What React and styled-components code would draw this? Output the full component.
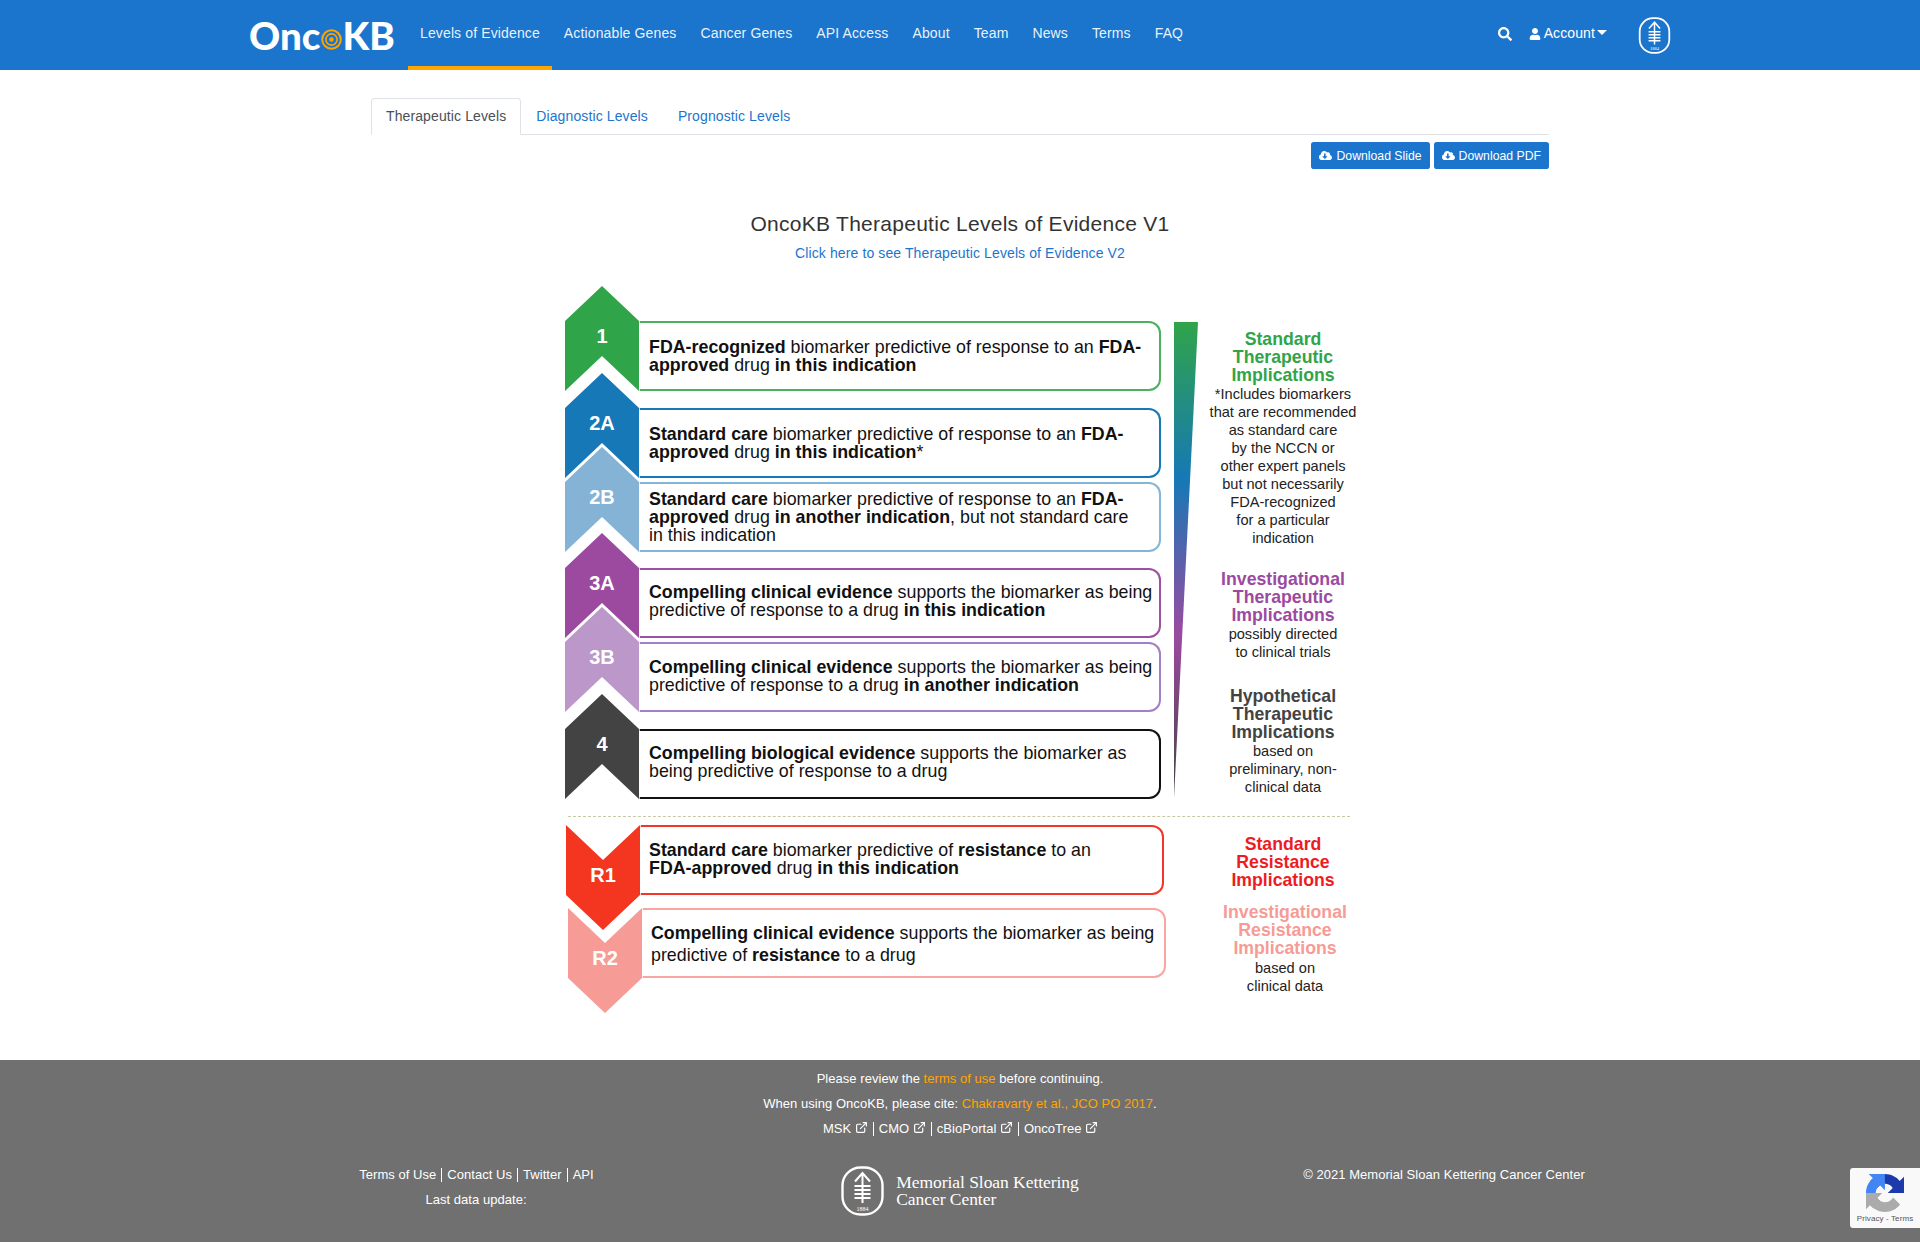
import React from 'react';
import styled, { createGlobalStyle } from 'styled-components';
import { FaSearch, FaUser, FaCloudDownloadAlt } from 'react-icons/fa';
import { ExternalLink } from 'lucide-react';

const BLUE = '#1c75cd';
const ORANGE = '#ffa500';

const GlobalStyle = createGlobalStyle`
  html { font-size: 14px; }
  body {
    margin: 0;
    background: #fff;
    color: #212529;
    font-family: "Liberation Sans", Arial, sans-serif;
    font-size: 14px;
    line-height: 1.5;
    letter-spacing: 0.11px;
  }
  a { text-decoration: none; color: inherit; }
`;

const Page = styled.div`
  position: relative;
  min-height: 1242px;
  display: flex;
  flex-direction: column;
`;

const NavBar = styled.header`
  height: 70px;
  background: ${BLUE};
  color: rgba(255, 255, 255, 0.92);
`;

const NavInner = styled.div`
  width: 1452px;
  height: 100%;
  margin: 0 auto;
  padding: 0 15px 0 15px;
  box-sizing: border-box;
  display: flex;
  align-items: center;
`;

const Brand = styled.a`
  display: flex;
  align-items: center;
  width: 147px;
  margin-right: 12px;
  color: #fff;
  font-family: Lato, "Liberation Sans", sans-serif;
  font-weight: 900;
  font-size: 38.5px;
  line-height: 1;
  letter-spacing: 0;
`;

const NavLinks = styled.nav`
  display: flex;
  align-self: stretch;
  letter-spacing: 0.13px;
`;

const NavLink = styled.a`
  display: flex;
  align-items: center;
  padding: 0 12px;
  box-sizing: border-box;
  border-bottom: 4px solid ${(p) => (p.$active ? ORANGE : 'transparent')};
`;

const NavRight = styled.div`
  margin-left: auto;
  display: flex;
  align-items: center;
  color: #fff;
`;

const SearchIcon = styled(FaSearch)`
  font-size: 14px;
  margin-right: 17px;
  margin-bottom: 3px;
`;

const Account = styled.a`
  display: flex;
  align-items: center;
  gap: 3px;
  margin-right: 31px;
  margin-bottom: 3px;
  svg { font-size: 12px; }
`;

const Caret = styled.span`
  width: 0;
  height: 0;
  margin-left: -1px;
  margin-bottom: 3px;
  border-left: 5px solid transparent;
  border-right: 5px solid transparent;
  border-top: 5px solid #fff;
`;

const Main = styled.main`
  width: 1178px;
  margin: 0 auto;
  padding-top: 28px;
  flex: 1;
`;

const Tabs = styled.div`
  display: flex;
  border-bottom: 1px solid #dee2e6;
`;

const Tab = styled.a`
  padding: 7px 14px;
  margin-bottom: -1px;
  border: 1px solid ${(p) => (p.$active ? '#dee2e6' : 'transparent')};
  border-bottom-color: ${(p) => (p.$active ? '#fff' : 'transparent')};
  border-radius: 3.5px 3.5px 0 0;
  color: ${(p) => (p.$active ? '#495057' : BLUE)};
`;

const Actions = styled.div`
  display: flex;
  justify-content: flex-end;
  gap: 4px;
  margin-top: 7px;
`;

const DownloadButton = styled.button`
  display: flex;
  align-items: center;
  gap: 4px;
  height: 27px;
  padding: 0 8px;
  border: 0;
  border-radius: 2.8px;
  background: ${BLUE};
  color: #fff;
  font-family: inherit;
  font-size: 12.25px;
  letter-spacing: 0;
  svg { font-size: 13px; }
`;

const Heading = styled.div`
  margin-top: 39px;
  text-align: center;
`;

const Title = styled.h4`
  margin: 0;
  font-size: 21px;
  font-weight: 400;
  line-height: 31px;
  letter-spacing: 0.27px;
  color: #333;
`;

const SubLink = styled.a`
  display: block;
  margin-top: 4px;
  color: ${BLUE};
`;

const Diagram = styled.div`
  width: 800px;
  margin: 57px 0 0 194px;
  letter-spacing: 0;
`;

const DiagramBand = styled.div`
  display: flex;
  align-items: flex-start;
`;

const Rows = styled.div`
  width: ${(p) => p.$width}px;
  flex: none;
`;

const Row = styled.div`
  position: relative;
  display: flex;
  width: ${(p) => p.$width || 596}px;
  height: 70px;
  margin-top: ${(p) => p.$gap || 0}px;
  margin-left: ${(p) => p.$indent || 0}px;
`;

const ChevronBox = styled.div`
  position: absolute;
  left: 0;
  top: ${(p) => (p.$down ? 0 : -35)}px;
  width: 74px;
  height: 105px;
  svg { display: block; }
`;

const ChevronLabel = styled.span`
  position: absolute;
  left: 0;
  right: 0;
  top: 38px;
  text-align: center;
  color: #fff;
  font-size: 20px;
  font-weight: 700;
  line-height: 24px;
`;

const RowText = styled.div`
  flex: 1;
  margin-left: 74px;
  padding: ${(p) => p.$drop || 0}px 0 ${(p) => p.$lift || 0}px ${(p) => p.$pad || 10}px;
  display: flex;
  align-items: center;
  box-sizing: border-box;
  border: 2px solid ${(p) => p.$color};
  border-left: 0;
  border-radius: 0 12px 12px 0;
  color: #111;
  font-size: 17.8px;
  letter-spacing: 0.02px;
  line-height: ${(p) => p.$line || 18}px;
  white-space: nowrap;
  b { font-weight: 700; }
`;

const Wedge = styled.svg`
  flex: none;
  width: 24px;
  height: 476px;
  margin: 1px 0 0 13px;
`;

const Notes = styled.div`
  flex: none;
  width: 170px;
  margin-top: ${(p) => p.$top}px;
  margin-left: ${(p) => p.$left || 0}px;
  text-align: center;
  line-height: 18px;
  white-space: nowrap;
`;

const NoteGroup = styled.div`
  margin-top: ${(p) => p.$gap || 0}px;
  padding-left: ${(p) => p.$shift || 0}px;
`;

const NoteTitle = styled.div`
  color: ${(p) => p.$color};
  font-size: 17.7px;
  font-weight: 700;
`;

const NoteText = styled.div`
  color: #222;
  font-size: 14.6px;
  margin-top: ${(p) => p.$gap || 0}px;
`;

const Divider = styled.div`
  width: 782px;
  margin: 17px 0 8px 3px;
  border-top: 1px dashed #c8c7a6;
`;

const Footer = styled.footer`
  height: 182px;
  background: #707070;
  color: #fff;
  font-size: 13px;
  letter-spacing: 0.04px;
  box-sizing: border-box;
  padding-top: 6px;
`;

const FooterLine = styled.div`
  display: flex;
  justify-content: center;
  align-items: center;
  height: 25px;
  white-space: pre;
`;

const Accent = styled.a`
  color: ${ORANGE};
`;

const FooterGrid = styled.div`
  width: 1452px;
  margin: 21px auto 0;
  display: grid;
  grid-template-columns: repeat(3, 1fr);
`;

const FooterCol = styled.div`
  display: flex;
  flex-direction: column;
  align-items: center;
`;

const Sep = styled.a`
  padding: 0 5px;
  line-height: 14px;
  border-left: 1px solid ${(p) => (p.$first ? 'transparent' : '#fff')};
  display: inline-flex;
  align-items: center;
  gap: 3.5px;
  svg { margin-top: -2px; }
`;

const MskFooter = styled.div`
  display: flex;
  align-items: center;
  gap: 12px;
  margin-top: 4px;
  color: #fff;
`;

const MskName = styled.div`
  font-family: "Liberation Serif", serif;
  font-size: 17.5px;
  line-height: 17px;
  letter-spacing: -0.05px;
  white-space: nowrap;
  margin-top: -1px;
`;

const Recaptcha = styled.div`
  position: absolute;
  right: 0;
  bottom: 14px;
  width: 70px;
  height: 60px;
  background: #f9f9f9;
  border-radius: 3px 0 0 3px;
  display: flex;
  flex-direction: column;
  align-items: center;
  padding-top: 6px;
  box-sizing: border-box;
  color: #555;
  font-size: 8px;
  line-height: 10px;
  white-space: nowrap;
  svg { display: block; margin-bottom: 2px; }
`;

const upPoints = '37,0 74,35 74,105 37,70 0,105 0,35';
const downPoints = '0,0 37,35 74,0 74,70 37,105 0,70';

const Chevron = ({ label, color, down }) => (
  <ChevronBox $down={down}>
    <svg width="74" height="105" viewBox="0 0 74 105" overflow="visible">
      <polygon points={down ? downPoints : upPoints} fill={color} stroke="#fff" strokeWidth="1.5" paintOrder="stroke" />
    </svg>
    <ChevronLabel>{label}</ChevronLabel>
  </ChevronBox>
);

const Target = () => (
  <svg width="21" height="21" viewBox="0 0 21 21" style={{ margin: '8px 0 0 1px', flex: 'none' }}>
    <circle cx="10.5" cy="10.5" r="9.3" fill="none" stroke={ORANGE} strokeWidth="2" />
    <circle cx="10.5" cy="10.5" r="5.6" fill="none" stroke={ORANGE} strokeWidth="1.6" />
    <circle cx="10.5" cy="10.5" r="2.2" fill={ORANGE} />
  </svg>
);

const MskMark = ({ width, height }) => (
  <svg width={width} height={height} viewBox="0 0 43 50">
    <rect x="1.5" y="1.5" width="40" height="47" rx="18" fill="none" stroke="#fff" strokeWidth="2.4" />
    <path d="M21.5 7v30M14 15.5l7.5-8.5 7.5 8.5" fill="none" stroke="#fff" strokeWidth="2" />
    <path d="M13.5 20h16M13.5 24h16M13.5 28h16M13.5 32h16" fill="none" stroke="#fff" strokeWidth="2" />
    <text x="21.5" y="44.5" textAnchor="middle" fill="#fff" fontSize="6" fontFamily="Liberation Serif, serif">1884</text>
  </svg>
);

const RecaptchaMark = () => (
  <svg width="38" height="38" viewBox="0 0 64 64">
    <path d="M64 31.955l-.033-1.37V4.687l-7.16 7.16C50.948 4.674 42.033.093 32.05.093c-10.4 0-19.622 4.96-25.458 12.64l11.736 11.86a15.55 15.55 0 0 1 4.754-5.334c2.05-1.6 4.952-2.906 8.968-2.906.485 0 .86.057 1.135.163 4.976.393 9.288 3.14 11.828 7.124l-8.307 8.307 26.294-.001" fill="#1c3aa9" />
    <path d="M31.862.094l-1.37.033H4.594l7.16 7.16C4.58 13.147 0 22.06 0 32.046c0 10.4 4.96 19.622 12.64 25.458L24.5 45.768a15.55 15.55 0 0 1-5.334-4.754c-1.6-2.05-2.906-4.952-2.906-8.968 0-.485.057-.86.163-1.135.393-4.976 3.14-9.288 7.124-11.828l8.307 8.307.001-26.294" fill="#4285f4" />
    <path d="M.001 32.045l.033 1.37v25.898l7.16-7.16c5.86 7.173 14.774 11.754 24.76 11.754 10.4 0 19.622-4.96 25.458-12.64L45.676 39.41a15.55 15.55 0 0 1-4.754 5.334c-2.05 1.6-4.952 2.906-8.968 2.906-.485 0-.86-.057-1.135-.163-4.976-.393-9.288-3.14-11.828-7.124l8.307-8.307-26.294.001" fill="#ababab" />
  </svg>
);

const navItems = ['Levels of Evidence', 'Actionable Genes', 'Cancer Genes', 'API Access', 'About', 'Team', 'News', 'Terms', 'FAQ'];

const levels = [
  { label: '1', color: '#30a449', line: '#4cb05f', gap: 0, text: <><b>FDA-recognized</b> biomarker predictive of response to an <b>FDA-</b><br /><b>approved</b> drug <b>in this indication</b></> },
  { label: '2A', color: '#1678b6', line: '#1678b6', gap: 17, text: <><b>Standard care</b> biomarker predictive of response to an <b>FDA-</b><br /><b>approved</b> drug <b>in this indication</b>*</> },
  { label: '2B', color: '#84b3d6', line: '#85b6d8', gap: 4, text: <><b>Standard care</b> biomarker predictive of response to an <b>FDA-</b><br /><b>approved</b> drug <b>in another indication</b>, but not standard care<br />in this indication</> },
  { label: '3A', color: '#9b4a9f', line: '#9e50a2', gap: 16, lift: 4, text: <><b>Compelling clinical evidence</b> supports the biomarker as being<br />predictive of response to a drug <b>in this indication</b></> },
  { label: '3B', color: '#bc97c9', line: '#a57fc4', gap: 4, lift: 2, text: <><b>Compelling clinical evidence</b> supports the biomarker as being<br />predictive of response to a drug <b>in another indication</b></> },
  { label: '4', color: '#434343', line: '#111', gap: 17, lift: 4, text: <><b>Compelling biological evidence</b> supports the biomarker as<br />being predictive of response to a drug</> },
];

export default function App() {
  return (
    <Page>
      <GlobalStyle />
      <NavBar>
        <NavInner>
          <Brand href="#">Onc<Target />KB</Brand>
          <NavLinks>
            {navItems.map((item, i) => (
              <NavLink href="#" key={item} $active={i === 0}>{item}</NavLink>
            ))}
          </NavLinks>
          <NavRight>
            <SearchIcon />
            <Account href="#"><FaUser />Account<Caret /></Account>
            <MskMark width={33} height={37} />
          </NavRight>
        </NavInner>
      </NavBar>

      <Main>
        <Tabs>
          <Tab href="#" $active>Therapeutic Levels</Tab>
          <Tab href="#">Diagnostic Levels</Tab>
          <Tab href="#">Prognostic Levels</Tab>
        </Tabs>
        <Actions>
          <DownloadButton><FaCloudDownloadAlt />Download Slide</DownloadButton>
          <DownloadButton><FaCloudDownloadAlt />Download PDF</DownloadButton>
        </Actions>
        <Heading>
          <Title>OncoKB Therapeutic Levels of Evidence V1</Title>
          <SubLink href="#">Click here to see Therapeutic Levels of Evidence V2</SubLink>
        </Heading>

        <Diagram>
          <DiagramBand>
            <Rows $width={596}>
              {levels.map((level) => (
                <Row key={level.label} $gap={level.gap}>
                  <Chevron label={level.label} color={level.color} />
                  <RowText $color={level.line} $lift={level.lift}>
                    <div>{level.text}</div>
                  </RowText>
                </Row>
              ))}
            </Rows>
            <Wedge viewBox="0 0 24 476" preserveAspectRatio="none">
              <defs>
                <linearGradient id="wedge" x1="0" y1="0" x2="0" y2="1">
                  <stop offset="0" stopColor="#30a449" />
                  <stop offset="0.33" stopColor="#1678b6" />
                  <stop offset="0.66" stopColor="#9b4a9f" />
                  <stop offset="1" stopColor="#434343" />
                </linearGradient>
              </defs>
              <polygon points="0,0 24,0 0,476" fill="url(#wedge)" />
            </Wedge>
            <Notes $top={9}>
              <NoteGroup>
                <NoteTitle $color="#30a449">Standard<br />Therapeutic<br />Implications</NoteTitle>
                <NoteText $gap={1}>*Includes biomarkers<br />that are recommended<br />as standard care<br />by the NCCN or<br />other expert panels<br />but not necessarily<br />FDA-recognized<br />for a particular<br />indication</NoteText>
              </NoteGroup>
              <NoteGroup $gap={23}>
                <NoteTitle $color="#9b4a9f">Investigational<br />Therapeutic<br />Implications</NoteTitle>
                <NoteText $gap={1}>possibly directed<br />to clinical trials</NoteText>
              </NoteGroup>
              <NoteGroup $gap={26}>
                <NoteTitle $color="#434343">Hypothetical<br />Therapeutic<br />Implications</NoteTitle>
                <NoteText $gap={1}>based on<br />preliminary, non-<br />clinical data</NoteText>
              </NoteGroup>
            </Notes>
          </DiagramBand>

          <Divider />

          <DiagramBand>
            <Rows $width={600}>
              <Row $indent={1} $width={598}>
                <Chevron down label="R1" color="#f43620" />
                <RowText $color="#f4362a" $lift={2} $pad={9}>
                  <div><b>Standard care</b> biomarker predictive of <b>resistance</b> to an<br /><b>FDA-approved</b> drug <b>in this indication</b></div>
                </RowText>
              </Row>
              <Row $indent={3} $width={598} $gap={13}>
                <Chevron down label="R2" color="#f69b95" />
                <RowText $color="#f9a5a0" $line={22} $pad={9} $drop={2}>
                  <div><b>Compelling clinical evidence</b> supports the biomarker as being<br />predictive of <b>resistance</b> to a drug</div>
                </RowText>
              </Row>
            </Rows>
            <Notes $top={10} $left={33}>
              <NoteGroup>
                <NoteTitle $color="#ed1c24">Standard<br />Resistance<br />Implications</NoteTitle>
              </NoteGroup>
              <NoteGroup $gap={14} $shift={4}>
                <NoteTitle $color="#f69b95">Investigational<br />Resistance<br />Implications</NoteTitle>
                <NoteText $gap={2}>based on<br />clinical data</NoteText>
              </NoteGroup>
            </Notes>
          </DiagramBand>
        </Diagram>
      </Main>

      <Footer>
        <FooterLine>Please review the <Accent href="#">terms of use</Accent> before continuing.</FooterLine>
        <FooterLine>When using OncoKB, please cite: <Accent href="#">Chakravarty et al., JCO PO 2017</Accent>.</FooterLine>
        <FooterLine>
          <Sep href="#" $first>MSK<ExternalLink size={13} strokeWidth={2.2} /></Sep>
          <Sep href="#">CMO<ExternalLink size={13} strokeWidth={2.2} /></Sep>
          <Sep href="#">cBioPortal<ExternalLink size={13} strokeWidth={2.2} /></Sep>
          <Sep href="#">OncoTree<ExternalLink size={13} strokeWidth={2.2} /></Sep>
        </FooterLine>
        <FooterGrid>
          <FooterCol>
            <FooterLine>
              <Sep href="#" $first>Terms of Use</Sep>
              <Sep href="#">Contact Us</Sep>
              <Sep href="#">Twitter</Sep>
              <Sep href="#">API</Sep>
            </FooterLine>
            <FooterLine>Last data update:</FooterLine>
          </FooterCol>
          <FooterCol>
            <MskFooter>
              <MskMark width={43} height={50} />
              <MskName>Memorial Sloan Kettering<br />Cancer Center</MskName>
            </MskFooter>
          </FooterCol>
          <FooterCol>
            <FooterLine>© 2021 Memorial Sloan Kettering Cancer Center</FooterLine>
          </FooterCol>
        </FooterGrid>
      </Footer>

      <Recaptcha>
        <RecaptchaMark />
        Privacy - Terms
      </Recaptcha>
    </Page>
  );
}
